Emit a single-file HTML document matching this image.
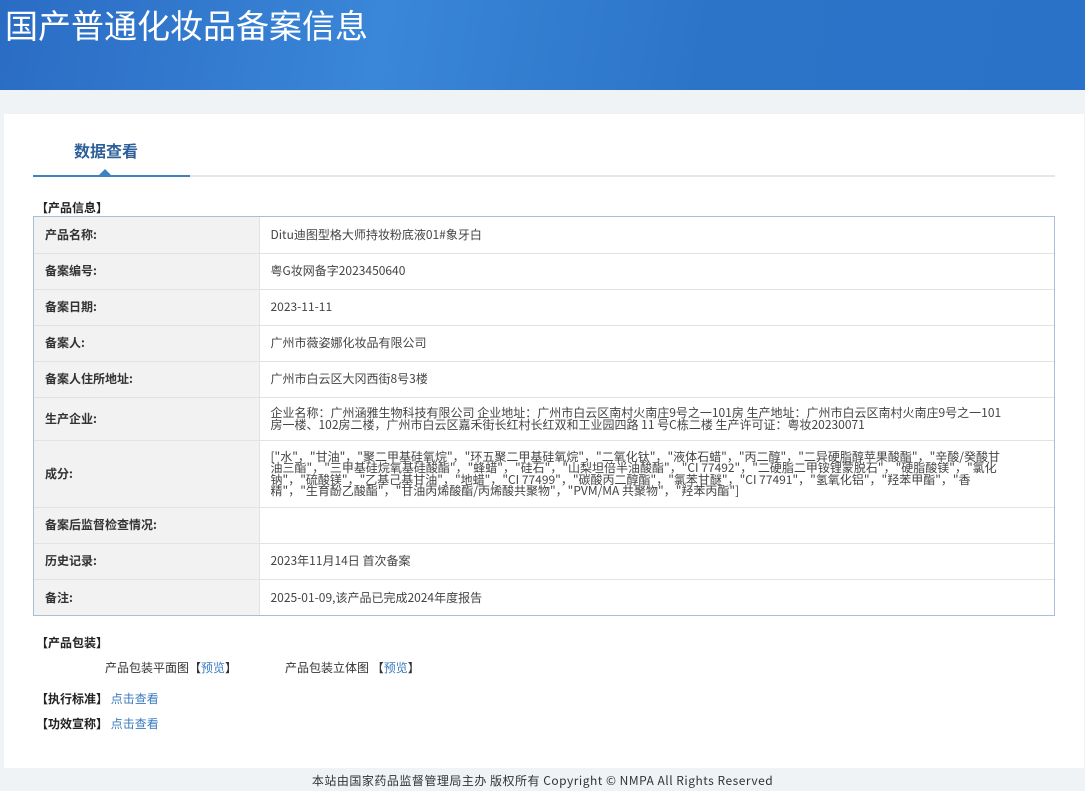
<!DOCTYPE html>
<html><head><meta charset="utf-8"><style>
*{margin:0;padding:0;box-sizing:border-box}
body{width:1085px;height:791px;background:#eff3f6;font-family:"Noto Sans CJK SC","Liberation Sans",sans-serif;font-size:12px;color:#333;position:relative;overflow:hidden}
.hd{position:absolute;left:0;top:0;width:1085px;height:90px;background:linear-gradient(100deg,#2a6cc4 0%,#3a86d8 35%,#2c74c8 65%,#2a72c8 100%)}
.hd h1{position:absolute;left:5px;top:1px;font-size:33px;line-height:46px;font-weight:normal;color:#fff;font-family:"Noto Sans CJK SC",sans-serif}
.card{position:absolute;left:4px;top:114px;width:1080px;height:654px;background:#fff}
.tab{position:absolute;left:74px;top:138px;font-size:16px;line-height:24px;font-weight:bold;color:#2d5f9a}
.line{position:absolute;left:33px;top:175px;width:1022px;height:2px;background:#e6e6e6}
.line b{position:absolute;left:0;top:0;width:157px;height:2px;background:#3d83c0}
.tri{position:absolute;left:99px;top:169px;width:0;height:0;border-left:6px solid transparent;border-right:6px solid transparent;border-bottom:6px solid #3d83c0}
.sec{position:absolute;left:36px;font-weight:bold;color:#222;font-size:12px;line-height:16px}
.tw{position:absolute;left:33px;top:216px;width:1022px;border:1px solid #a8bfd6}
table{width:100%;border-collapse:collapse}
td{border:1px solid #e2e2e2;padding:0 11px;vertical-align:middle;line-height:11.5px}
tr:first-child td{border-top:none}tr:last-child td{border-bottom:none}
td:first-child{border-left:none}td:last-child{border-right:none}
td.l{width:225px;background:#f2f2f2;font-weight:bold;color:#333;font-size:12px}
td.v{color:#444;padding-right:48px}
a{color:#3a7bbf;text-decoration:none}
.ft{position:absolute;left:0;top:773px;width:1085px;text-align:center;font-size:12px;color:#333;line-height:16px;letter-spacing:0.5px}
</style></head><body>
<div class="hd"><h1>国产普通化妆品备案信息</h1></div>
<div class="card"></div>
<div class="tab">数据查看</div>
<div class="line"><b></b></div>
<div class="tri"></div>
<div class="sec" style="top:200px">【产品信息】</div>
<div class="tw"><table>
<tr style="height:36px"><td class="l">产品名称:</td><td class="v">Ditu迪图型格大师持妆粉底液01#象牙白</td></tr>
<tr style="height:36px"><td class="l">备案编号:</td><td class="v">粤G妆网备字2023450640</td></tr>
<tr style="height:36px"><td class="l">备案日期:</td><td class="v">2023-11-11</td></tr>
<tr style="height:36px"><td class="l">备案人:</td><td class="v">广州市薇姿娜化妆品有限公司</td></tr>
<tr style="height:36px"><td class="l">备案人住所地址:</td><td class="v">广州市白云区大冈西街8号3楼</td></tr>
<tr style="height:43px"><td class="l">生产企业:</td><td class="v">企业名称：广州涵雅生物科技有限公司 企业地址：广州市白云区南村火南庄9号之一101房 生产地址：广州市白云区南村火南庄9号之一101房一楼、102房二楼，广州市白云区嘉禾街长红村长红双和工业园四路 11 号C栋二楼 生产许可证：粤妆20230071</td></tr>
<tr style="height:67px"><td class="l">成分:</td><td class="v">["水"，"甘油"，"聚二甲基硅氧烷"，"环五聚二甲基硅氧烷"，"二氧化钛"，"液体石蜡"，"丙二醇"，"二异硬脂醇苹果酸酯"，"辛酸/癸酸甘油三酯"，"三甲基硅烷氧基硅酸酯"，"蜂蜡"，"硅石"，"山梨坦倍半油酸酯"，"CI 77492"，"二硬脂二甲铵锂蒙脱石"，"硬脂酸镁"，"氯化钠"，"硫酸镁"，"乙基己基甘油"，"地蜡"，"CI 77499"，"碳酸丙二醇酯"，"氯苯甘醚"，"CI 77491"，"氢氧化铝"，"羟苯甲酯"，"香精"，"生育酚乙酸酯"，"甘油丙烯酸酯/丙烯酸共聚物"，"PVM/MA 共聚物"，"羟苯丙酯"]</td></tr>
<tr style="height:36px"><td class="l">备案后监督检查情况:</td><td class="v"></td></tr>
<tr style="height:36px"><td class="l">历史记录:</td><td class="v">2023年11月14日 首次备案</td></tr>
<tr style="height:36px"><td class="l">备注:</td><td class="v">2025-01-09,该产品已完成2024年度报告</td></tr>
</table></div>
<div class="sec" style="top:635px">【产品包装】</div>
<div style="position:absolute;left:105px;top:660px;line-height:16px">产品包装平面图【<a>预览</a>】</div>
<div style="position:absolute;left:285px;top:660px;line-height:16px">产品包装立体图 【<a>预览</a>】</div>
<div class="sec" style="top:691px">【执行标准】 <a style="font-weight:normal">点击查看</a></div>
<div class="sec" style="top:716px">【功效宣称】 <a style="font-weight:normal">点击查看</a></div>
<div class="ft">本站由国家药品监督管理局主办 版权所有 Copyright © NMPA All Rights Reserved</div>
</body></html>
